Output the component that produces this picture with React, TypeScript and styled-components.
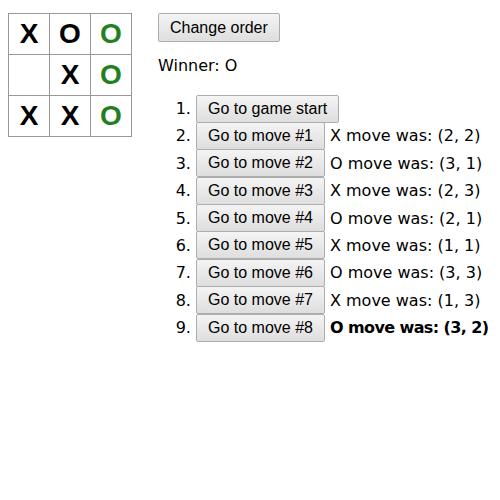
import { FC } from 'react';
import styled, { createGlobalStyle } from 'styled-components';

const GlobalStyle = createGlobalStyle`
    body {
        margin: 8px;
        background: #fff;
        font-family: "Century Gothic", "DejaVu Sans", sans-serif;
        font-size: 16px;
        color: #000;
    }
`;

const Game = styled.div`
    display: flex;
    flex-direction: row;
    margin-top: 5px;
`;

const Board = styled.div`
    display: grid;
    grid-template-columns: repeat(3, 41px);
    grid-template-rows: repeat(3, 41px);
    padding: 0 1px 1px 0;
    align-self: flex-start;
`;

const Square = styled.button<{ $win: boolean }>`
    width: 42px;
    height: 42px;
    margin: 0;
    padding: 0;
    background: #fff;
    border: 1px solid #999;
    font-family: "Liberation Sans", Arial, sans-serif;
    font-size: 28px;
    font-weight: bold;
    line-height: 40px;
    text-align: center;
    color: ${(p) => (p.$win ? '#22801f' : '#000')};
`;

const GameInfo = styled.div`
    margin-left: 26px;
    display: flex;
    flex-direction: column;
    align-items: flex-start;
`;

const Button = styled.button`
    font-family: "Liberation Sans", Arial, sans-serif;
    font-size: 16px;
    line-height: 18px;
    color: #000;
    background: linear-gradient(#f4f4f4, #dedede);
    border: 1px solid #adadad;
    border-radius: 2px;
    padding: 4px 11px;
    height: 28px;
    margin: 0;
    white-space: nowrap;
`;

const OrderButton = styled(Button)`
    height: 29px;
`;

const Status = styled.div`
    margin-top: 14px;
    line-height: 20px;
`;

const MoveList = styled.ol`
    margin: 19px 0 0;
    padding-left: 38px;
`;

const MoveItem = styled.li`
    height: 27.4px;
    line-height: 27px;
    white-space: nowrap;
`;

const MoveRow = styled.div`
    display: inline-flex;
    align-items: center;
    gap: 5px;
    height: 27px;
    vertical-align: top;
`;

const MoveText = styled.span<{ $current: boolean }>`
    font-weight: ${(p) => (p.$current ? 'bold' : 'normal')};
    letter-spacing: ${(p) => (p.$current ? '-0.6px' : '0')};
`;

const squares = ['X', 'O', 'O', '', 'X', 'O', 'X', 'X', 'O'];
const winLine = [2, 5, 8];

const moves = [
    { player: 'X', pos: '(2, 2)' },
    { player: 'O', pos: '(3, 1)' },
    { player: 'X', pos: '(2, 3)' },
    { player: 'O', pos: '(2, 1)' },
    { player: 'X', pos: '(1, 1)' },
    { player: 'O', pos: '(3, 3)' },
    { player: 'X', pos: '(1, 3)' },
    { player: 'O', pos: '(3, 2)' },
];

const App: FC = () => {
    return (
        <>
            <GlobalStyle />
            <Game>
                <Board>
                    {squares.map((s, i) => (
                        <Square key={i} $win={winLine.includes(i)}>{s}</Square>
                    ))}
                </Board>
                <GameInfo>
                    <OrderButton>Change order</OrderButton>
                    <Status>Winner: O</Status>
                    <MoveList>
                        <MoveItem>
                            <MoveRow>
                                <Button>Go to game start</Button>
                            </MoveRow>
                        </MoveItem>
                        {moves.map((m, i) => (
                            <MoveItem key={i}>
                                <MoveRow>
                                    <Button>Go to move #{i + 1}</Button>
                                    <MoveText $current={i === moves.length - 1}>
                                        {m.player} move was: {m.pos}
                                    </MoveText>
                                </MoveRow>
                            </MoveItem>
                        ))}
                    </MoveList>
                </GameInfo>
            </Game>
        </>
    );
};

export default App;
